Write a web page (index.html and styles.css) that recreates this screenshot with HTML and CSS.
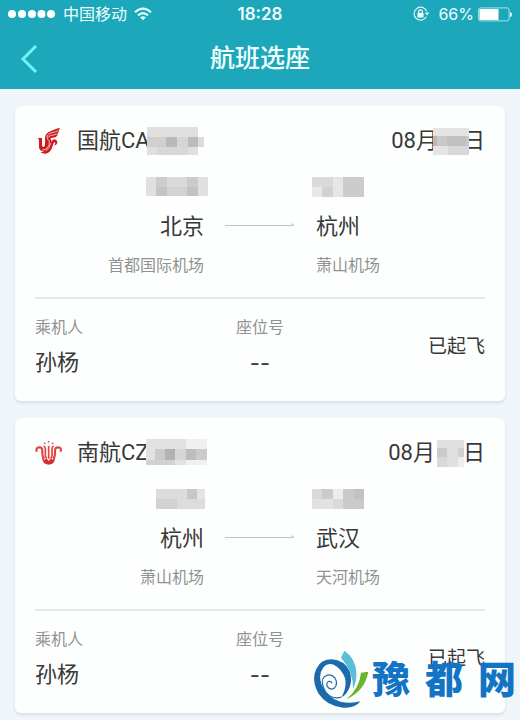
FILE: index.html
```
<!DOCTYPE html>
<html lang="zh-CN">
<head>
<meta charset="utf-8">
<meta name="viewport" content="width=device-width, initial-scale=1">
<title>航班选座</title>
<link rel="stylesheet" href="styles.css">
</head>
<body>
<header class="top">
  <div class="status">
    <div class="status-left">
      <svg class="signal" width="48" height="10" viewBox="0 0 48 10" aria-hidden="true"><g fill="#fff"><circle cx="4" cy="5" r="4"/><circle cx="14" cy="5" r="4"/><circle cx="24" cy="5" r="4"/><circle cx="33.500" cy="5" r="4"/><circle cx="43" cy="5" r="4"/></g></svg>
      <span>中国移动</span>
      <svg width="18" height="14" viewBox="0 0 18 14" aria-hidden="true"><g fill="none" stroke="#e4ffff" stroke-width="2.200"><path d="M1 5.200Q9 -2 17 5.200"/><path d="M4 8.400Q9 4 14 8.400"/></g><path d="M6.200 10.400Q9 8 11.800 10.400L9 13.200Z" fill="#e4ffff"/></svg>
    </div>
    <time class="clock">18:28</time>
    <div class="status-right">
      <svg class="lock" width="17" height="16" viewBox="0 0 17 16" aria-hidden="true"><path d="M13.300 10.800A6.500 6.500 0 1 1 13.600 5.200" fill="none" stroke="#d4fbff" stroke-width="1.200"/><path d="M11.600 6.500H16.400L14 9.500Z" fill="#d4fbff"/><rect x="4.500" y="7" width="6" height="4.500" fill="#fff"/><path d="M5.700 7V5.600A1.800 1.800 0 0 1 9.300 5.600V7" fill="none" stroke="#fff" stroke-width="1.200"/></svg>
      <span>66%</span>
      <svg width="34" height="15" viewBox="0 0 34 15" aria-hidden="true"><rect x=".6" y=".9" width="30.500" height="13" rx="2" fill="none" stroke="#9fe9ef" stroke-width="1"/><rect x="1.500" y="2" width="19" height="11" fill="#fff"/><path d="M32 5Q34 5 34 7.500T32 10Z" fill="#d4fbff"/></svg>
    </div>
  </div>
  <div class="nav">
    <button class="back" type="button" aria-label="返回"><svg width="18" height="30" viewBox="0 0 18 30"><path d="M16 2L3 15L16 28" fill="none" stroke="#6ff3f7" stroke-width="3"/></svg></button>
    <h1>航班选座</h1>
  </div>
</header>
<main class="list">
  <article class="card">
    <div class="flight">
      <svg class="logo" width="28" height="28" viewBox="30 48 84 84" aria-hidden="true"><path d="M38 81H51V103Q52 109 57 107Q60 105 60 98V82Q60 70 71 63Q79 58 104 50Q103 66 92 72Q98 70 99 71Q95 79 84 80Q76 80 76 82Q80 88 80 93Q82 84 89 85Q98 88 97 96Q94 104 87 103Q93 98 90 94Q86 94 84 101Q80 122 63 128Q53 129 46 123Q53 124 57 121Q43 121 42 108V86Z" fill="#cf1a20"/><path d="M101 58Q93 63 81 65Q67 68 66 79Q67 85 73 90Q75 103 67 111Q61 117 52 117M94 69Q87 73 79 73Q71 74 71 79M77 97Q74 112 62 120" fill="none" stroke="#fdeeee" stroke-width="2.200"/></svg>
      <h2>国航CA</h2>
      <svg class="blur-no" width="61" height="28" viewBox="0 0 61 28" aria-hidden="true"><path fill="#e0e0e0" d="M0 0H51V28H0Z"/><path fill="#d0d0d0" d="M0 10H19V20H0Z"/><path fill="#b9b9b9" d="M19 10H30V20H19Z"/><path fill="#d5d5d5" d="M30 10H41V20H30Z"/><path fill="#bcbcbc" d="M41 10H51V20H41Z"/><path fill="#dcdcdc" d="M51 10H57V20H51Z"/><path fill="#d8d8d8" d="M10 20H41V28H10Z"/></svg>
      <div class="date"><span>08月</span><svg class="blur-day" width="36" height="27" viewBox="0 0 36 27" aria-hidden="true"><path fill="#e4e4e4" d="M0 0H36V27H0Z"/><path fill="#c9c9c9" d="M0 8H36V18H0Z"/><path fill="#b9b9b9" d="M0 8H4V18H0Z"/><path fill="#c0c0c0" d="M14 8H33V18H14Z"/><path fill="#d8d8d8" d="M15 18H36V27H15Z"/></svg><span>日</span></div>
    </div>
    <div class="route">
      <div class="stop from">
        <svg class="blur-time" width="62" height="20" viewBox="0 0 62 20" aria-hidden="true"><path fill="#e0e0e0" d="M0 0H62V19H0Z"/><path fill="#cdcdcd" d="M10 0H21V19H10Z"/><path fill="#c4c4c4" d="M10 10H21V19H10Z"/><path fill="#dadada" d="M21 0H41V19H21Z"/><path fill="#d2d2d2" d="M21 10H52V19H21Z"/><path fill="#cbcbcb" d="M41 0H52V10H41Z"/><path fill="#c2c2c2" d="M41 10H52V19H41Z"/></svg>
        <strong>北京</strong><span>首都国际机场</span>
      </div>
      <svg class="arrow" width="70" height="5" viewBox="0 0 70 5" aria-hidden="true"><path d="M0 2.500H69M66 .5L69 2.500" fill="none" stroke="#c4c4c4"/></svg>
      <div class="stop to">
        <svg class="blur-time" width="52" height="20" viewBox="0 0 52 20" aria-hidden="true"><path fill="#dadada" d="M0 0H52V20H0Z"/><path fill="#e8e8e8" d="M0 10H10V20H0Z"/><path fill="#d2d2d2" d="M10 10H21V20H10Z"/><path fill="#e6e6e6" d="M21 0H31V20H21Z"/><path fill="#cccccc" d="M31 0H52V20H31Z"/></svg>
        <strong>杭州</strong><span>萧山机场</span>
      </div>
    </div>
    <div class="details">
      <dl><dt>乘机人</dt><dd>孙杨</dd></dl>
      <dl class="seat"><dt>座位号</dt><dd>--</dd></dl>
      <p class="state">已起飞</p>
    </div>
  </article>
  <article class="card">
    <div class="flight">
      <svg class="logo" width="28" height="28" viewBox="30 43 84 84" aria-hidden="true"><g fill="none" stroke="#df4240" stroke-width="6.500"><path d="M35 81Q32 68 42 68Q51 67 52 77V88Q52 97 58 102"/><path d="M107 81Q110 68 100 68Q91 67 90 77V88Q90 97 84 102"/><path d="M56 64Q61 66 61 73V92Q61 98 65 101M86 64Q81 66 81 73V92Q81 98 77 101M71 64V102" stroke-width="5"/></g><path d="M51 98L58 106L64 101L71 109L78 101L84 106L91 98Q90 120 71 120T51 98Z" fill="#d92c2d"/><g fill="#df5552"><circle cx="59" cy="56" r="2.800"/><circle cx="71" cy="51" r="2.800"/><circle cx="83" cy="56" r="2.800"/><path d="M67 57L71 62L75 57L71 60Z"/></g></svg>
      <h2>南航CZ</h2>
      <svg class="blur-no" width="61" height="28" viewBox="0 0 61 28" aria-hidden="true"><path fill="#e2e2e2" d="M0 0H40V26H0Z"/><path fill="#f0f0f0" d="M40 0H61V26H40Z"/><path fill="#cbcbcb" d="M9 10H61V21H9Z"/><path fill="#b2b2b2" d="M19 10H29V21H19Z"/><path fill="#d6d6d6" d="M29 10H40V21H29Z"/><path fill="#bdbdbd" d="M40 10H50V21H40Z"/><path fill="#d2d2d2" d="M0 21H29V26H0Z"/></svg>
      <div class="date"><span>08月</span><svg class="blur-day" width="39" height="27" viewBox="-3 0 39 27" aria-hidden="true"><path fill="#e0e0e0" d="M4 0H31V27H4Z"/><path fill="#cacaca" d="M4 8H14V17H4Z"/><path fill="#d0d0d0" d="M25 8H31V17H25Z"/><path fill="#d8d8d8" d="M4 17H14V27H4Z"/><path fill="#eee" d="M25 17H31V27H25Z"/></svg><span>日</span></div>
    </div>
    <div class="route">
      <div class="stop from">
        <svg class="blur-time" width="62" height="20" viewBox="0 0 62 20" aria-hidden="true"><path fill="#dcdcdc" d="M10 0H59V20H10Z"/><path fill="#d2d2d2" d="M10 10H31V20H10Z"/><path fill="#c7c7c7" d="M41 0H51V10H41Z"/><path fill="#e4e4e4" d="M51 0H59V10H51Z"/></svg>
        <strong>杭州</strong><span>萧山机场</span>
      </div>
      <svg class="arrow" width="70" height="5" viewBox="0 0 70 5" aria-hidden="true"><path d="M0 2.500H69M66 .5L69 2.500" fill="none" stroke="#c4c4c4"/></svg>
      <div class="stop to">
        <svg class="blur-time" width="52" height="20" viewBox="0 0 52 20" aria-hidden="true"><path fill="#dadada" d="M0 0H52V20H0Z"/><path fill="#cbcbcb" d="M10 0H21V10H10Z"/><path fill="#ececec" d="M21 0H31V10H21Z"/><path fill="#e2e2e2" d="M0 10H21V20H0Z"/><path fill="#cacaca" d="M31 0H52V20H31Z"/><path fill="#c2c2c2" d="M42 0H52V10H42Z"/></svg>
        <strong>武汉</strong><span>天河机场</span>
      </div>
    </div>
    <div class="details">
      <dl><dt>乘机人</dt><dd>孙杨</dd></dl>
      <dl class="seat"><dt>座位号</dt><dd>--</dd></dl>
      <p class="state">已起飞</p>
    </div>
    <div class="watermark">
      <svg width="56" height="60" viewBox="72 150 168 180" aria-hidden="true"><path fill="#1c6aab" d="M214 304Q198 326 162 323Q112 318 88 280Q66 240 82 206Q96 178 128 178Q166 180 182 214Q194 250 172 280Q166 288 158 291Q174 262 168 234Q156 204 134 194Q114 188 102 204Q88 222 97 252Q112 292 154 305Q186 312 214 304Z"/><path fill="none" stroke="#1c6aab" stroke-width="3.500" d="M158 291Q130 300 110 276Q92 244 106 230Q124 218 138 234Q148 252 136 264Q124 272 115 260Q110 248 120 244Q128 243 129 250"/><path fill="#5bbdd6" d="M166 152Q199 174 202 216Q204 244 192 266Q194 218 156 173Z"/><path fill="#68b52e" d="M216 218L238 215Q228 272 172 298Q212 264 216 218Z"/></svg>
      <div class="brand"><span>豫</span><span>都</span><span>网</span></div>
    </div>
  </article>
</main>
</body>
</html>
```
FILE: styles.css
```
* { box-sizing: border-box; }
body, h1, h2, p, dl, dd { margin: 0; }
body {
  min-height: 100vh;
  background: #f0f5f9;
  color: #383838;
  font-family: Roboto, "Noto Sans CJK SC", sans-serif;
}
svg { display: block; flex: none; }

.top { background: #1ca7ba; color: #f2ffff; }
.status {
  display: grid;
  grid-template-columns: 1fr auto 1fr;
  align-items: center;
  height: 28px;
  padding: 0 8px;
  font-family: Inter, "Noto Sans CJK SC", sans-serif;
  font-size: 16px;
  line-height: 28px;
}
.status-left, .status-right { display: flex; align-items: center; }
.status-left { gap: 7px; }
.status-right { justify-content: flex-end; gap: 4px; }
.lock { margin-right: 4px; }
.clock { font-size: 17px; font-weight: 600; }
.nav {
  display: grid;
  grid-template-columns: 1fr auto 1fr;
  align-items: center;
  height: 61px;
  padding: 0 20px;
}
.back { justify-self: start; padding: 0; border: 0; background: none; cursor: pointer; }
.nav h1 { font-size: 25px; font-weight: 500; line-height: 36px; }

.list { display: grid; gap: 17px; padding: 17px 15px 7px; }
.card {
  position: relative;
  padding: 20px 20px 23px;
  border-radius: 6px;
  background: #fdfffe;
  box-shadow: 0 2px 3px #d9dfe4;
}
.flight { display: flex; align-items: center; height: 30px; }
.logo { margin-right: 14px; }
.flight h2 { font-size: 22px; font-weight: 400; line-height: 30px; }
.blur-no { margin-left: -3px; }
.date {
  display: flex;
  align-items: center;
  margin-left: auto;
  font-size: 22px;
  line-height: 30px;
}
.blur-no, .blur-day { position: relative; }
.blur-day { margin: 0 -6px 0 -5px; }

.route {
  display: grid;
  grid-template-columns: 1fr 112px 1fr;
  padding: 21px 0 19px;
  border-bottom: 2px solid #e8eaea;
}
.stop { display: flex; flex-direction: column; }
.from { align-items: flex-end; }
.blur-time { margin: 0 -4px 15px; }
.stop strong { font-size: 22px; font-weight: 400; line-height: 30px; }
.stop span { margin-top: 12px; color: #929292; font-size: 16px; line-height: 24px; }
.arrow { margin-top: 46px; justify-self: center; }

.details {
  display: grid;
  grid-template-columns: 1fr auto 1fr;
  align-items: center;
  padding-top: 17px;
}
.details dt { color: #929292; font-size: 16px; line-height: 24px; }
.details dd { margin-top: 8px; font-size: 22px; line-height: 30px; }
.seat { text-align: center; }
.seat dd { font-family: Inter, sans-serif; }
.state { justify-self: end; font-size: 19px; line-height: 28px; }

.watermark {
  position: absolute;
  right: -11px;
  bottom: 3px;
  display: flex;
  align-items: center;
  gap: 3px;
}
.brand {
  display: flex;
  gap: 15px;
  color: #1274c5;
  font-size: 38px;
  font-weight: 900;
  line-height: 56px;
}
```
